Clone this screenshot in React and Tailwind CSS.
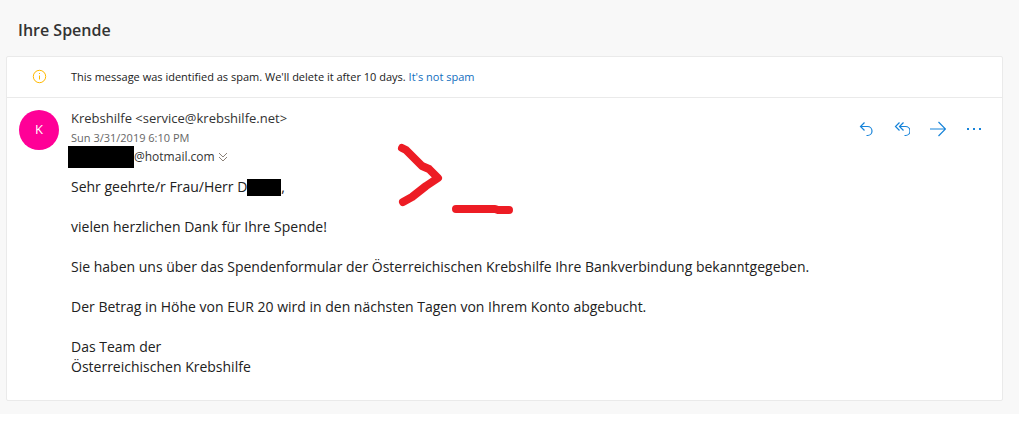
import React from 'react';

const PARAGRAPHS = [
  ['vielen herzlichen Dank für Ihre Spende!'],
  ['Sie haben uns über das Spendenformular der Österreichischen Krebshilfe Ihre Bankverbindung bekanntgegeben.'],
  ['Der Betrag in Höhe von EUR 20 wird in den nächsten Tagen von Ihrem Konto abgebucht.'],
  ['Das Team der', 'Österreichischen Krebshilfe'],
];

const ACTIONS = [
  { label: 'Reply', icon: <path d="M6.5 1.5l-4 4 4 4M2.5 5.5h7a4.5 4.5 0 0 1 0 9h-1" /> },
  { label: 'Reply all', icon: <path d="M5.5 1.5l-4 4 4 4M9.5 1.5l-4 4 4 4M5.5 5.5h6a4.5 4.5 0 0 1 0 9h-1" /> },
  { label: 'Forward', icon: <path d="M0 8h15.5M8.5 1l7 7-7 7" /> },
  {
    label: 'More actions',
    icon: (
      <g fill="currentColor" stroke="none">
        <rect x="1" y="7" width="2" height="2" />
        <rect x="7" y="7" width="2" height="2" />
        <rect x="13" y="7" width="2" height="2" />
      </g>
    ),
  },
];

function SpamNotice() {
  return (
    <div className="flex h-[41px] items-center border-b border-[#eaeaea] pl-6 text-[11px] text-[#212121]">
      <svg className="mr-6 shrink-0" width="16" height="16" viewBox="0 0 16 16" fill="none" stroke="#ffb900">
        <circle cx="8.5" cy="7.5" r="6.2" />
        <path d="M8.5 6.5v4M8.5 4v1" />
      </svg>
      <p>
        This message was identified as spam. We'll delete it after 10 days.{' '}
        <a href="#not-spam" className="text-[#106ebe]">It's not spam</a>
      </p>
    </div>
  );
}

function Actions() {
  return (
    <div className="flex items-start gap-5 pr-5 pt-[13px]">
      {ACTIONS.map(({ label, icon }) => (
        <button key={label} type="button" aria-label={label} className="text-[#1683d9]">
          <svg width="16" height="16" viewBox="0 0 16 16" fill="none" stroke="currentColor" strokeWidth="1.2">
            {icon}
          </svg>
        </button>
      ))}
    </div>
  );
}

// Hand-drawn marker strokes over the message
function Scribble() {
  return (
    <svg
      className="pointer-events-none absolute left-96 top-10"
      width="140"
      height="80"
      viewBox="0 0 140 80"
      fill="none"
      stroke="#ed1c24"
      strokeWidth="8"
      strokeLinecap="round"
      strokeLinejoin="round"
    >
      <path d="M11 10l4 2 16 16 7 3 9 9-12 8-14 11-9 5" />
      <path d="M65 71h39l3 1h11" />
    </svg>
  );
}

function Message() {
  return (
    <article className="relative flex pb-[23px] pl-3 pt-2.5">
      <div className="mr-3 mt-0.5 flex size-10 shrink-0 items-center justify-center rounded-full bg-[#ff0097] text-[13px] text-white">
        K
      </div>
      <div className="min-w-0 flex-1">
        <div className="flex justify-between">
          <div className="text-xs text-[#333333]">
            <p className="text-[13px] leading-5">Krebshilfe &lt;service@krebshilfe.net&gt;</p>
            <p className="text-[11px] leading-5 text-[#666666]">Sun 3/31/2019 6:10 PM</p>
            <div className="-ml-[3px] flex h-[18px] items-center">
              <span className="h-[22px] w-[66px] bg-black" />
              <span>@hotmail.com</span>
              <button type="button" aria-label="Show details" className="ml-[3px] text-[#8a8178]">
                <svg width="10" height="10" viewBox="0 0 10 10" fill="none" stroke="currentColor">
                  <path d="M1 1l4 4 4-4M1 5l4 4 4-4" />
                </svg>
              </button>
            </div>
          </div>
          <Actions />
        </div>
        <div className="mt-[11px] space-y-5 text-sm leading-5 text-[#212121]">
          <p className="flex items-center">
            Sehr geehrte/r Frau/Herr D
            <span className="h-[17px] w-[34px] bg-black" />,
          </p>
          {PARAGRAPHS.map((lines) => (
            <p key={lines[0]}>
              {lines.map((line) => (
                <span key={line} className="block">{line}</span>
              ))}
            </p>
          ))}
        </div>
      </div>
      <Scribble />
    </article>
  );
}

export default function App() {
  return (
    <main className="bg-[#f8f8f8] pb-[13px] pl-1.5 pr-4 pt-4 font-['Open_Sans','Noto_Sans',sans-serif]">
      <h1 className="mb-3 pl-3 text-base font-semibold leading-7 text-[#333333]">Ihre Spende</h1>
      <section className="rounded-xs border border-[#eaeaea] bg-white">
        <SpamNotice />
        <Message />
      </section>
    </main>
  );
}
